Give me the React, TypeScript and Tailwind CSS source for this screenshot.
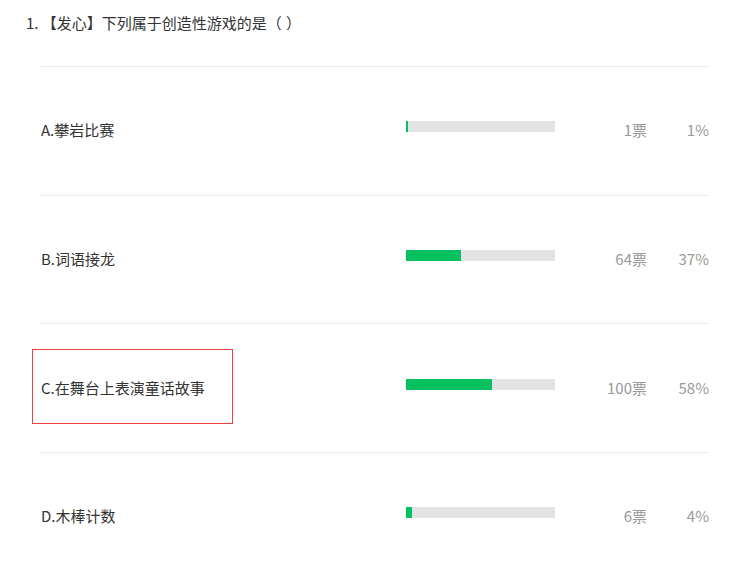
import React from "react";

const options = [
  { label: "A.攀岩比赛", votes: "1票", pct: 1 },
  { label: "B.词语接龙", votes: "64票", pct: 37 },
  { label: "C.在舞台上表演童话故事", votes: "100票", pct: 58, marked: true },
  { label: "D.木棒计数", votes: "6票", pct: 4 },
];

export default function App() {
  return (
    <div className="w-full min-h-[563px] bg-white font-['Noto_Sans_CJK_SC','Microsoft_YaHei',sans-serif] text-[15px] text-[#333]">
      <div className="h-[44px] flex items-center pl-[26px] leading-none whitespace-pre">
        <span>1. </span>
        <span>【发心】下列属于创造性游戏的是（</span>
        <span className="w-[4px]" />
        <span>）</span>
      </div>
      <div className="mt-[22px] ml-[41px] w-[668px]">
        {options.map((o) => (
          <div
            key={o.label}
            className="relative h-[128.67px] border-t border-[#e8e8e8] flex items-center leading-none"
          >
            {o.marked && (
              <div className="absolute left-[-9px] top-[25px] w-[201px] h-[75px] border border-[#f04040] pointer-events-none" />
            )}
            <div className="w-[365px] shrink-0 pb-[2px]">{o.label}</div>
            <div className="w-[149px] h-[11px] shrink-0 bg-[#e2e3e4] mb-[8px]">
              <div
                className="h-full bg-[#07c160]"
                style={{ width: `${Math.max(2, (o.pct / 100) * 149)}px` }}
              />
            </div>
            <div className="w-[92px] shrink-0 text-right text-[#999] pb-[2px]">{o.votes}</div>
            <div className="w-[62px] shrink-0 text-right text-[#999] pb-[2px]">{o.pct}%</div>
          </div>
        ))}
      </div>
    </div>
  );
}
